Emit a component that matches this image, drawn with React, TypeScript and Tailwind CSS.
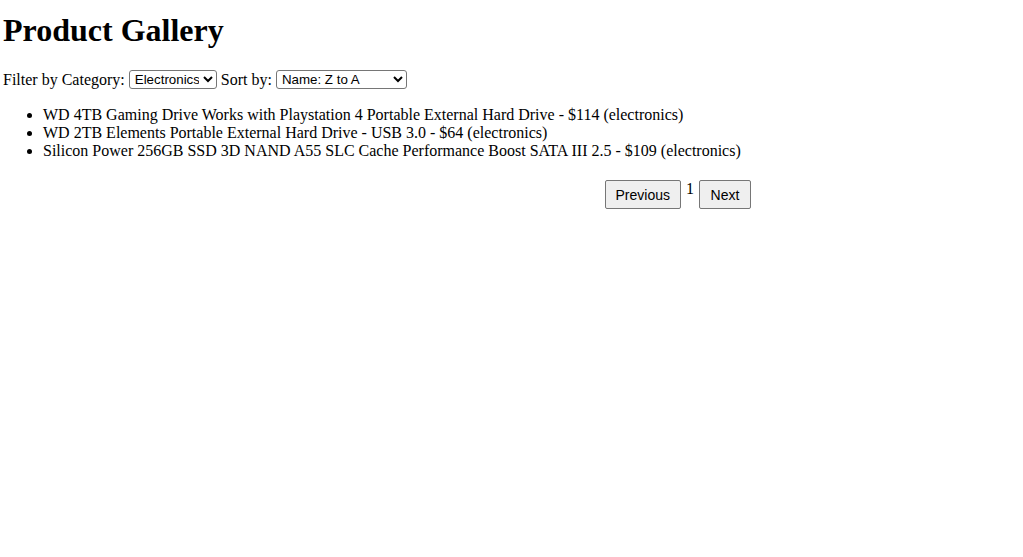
import React from "react";

export default function App() {
  const items = [
    "WD 4TB Gaming Drive Works with Playstation 4 Portable External Hard Drive - $114 (electronics)",
    "WD 2TB Elements Portable External Hard Drive - USB 3.0 - $64 (electronics)",
    "Silicon Power 256GB SSD 3D NAND A55 SLC Cache Performance Boost SATA III 2.5 - $109 (electronics)",
  ];
  return (
    <div className="bg-white text-black min-h-[557px] pl-[3px] text-[16px] leading-[18px]" style={{ fontFamily: '"Liberation Serif", "Times New Roman", serif' }}>
      <h1 className="text-[32px] font-bold leading-[37px] pt-[12px] mb-[21px]">Product Gallery</h1>
      <div className="leading-[19px] h-[19px] flex items-center">
        <span>Filter by Category:&nbsp;</span>
        <select
          defaultValue="electronics"
          className="w-[88px] h-[19px] border border-[#767676] rounded-[3px] bg-white text-[13.33px] px-[1px]"
          style={{ fontFamily: '"Liberation Sans", Arial, sans-serif' }}
        >
          <option value="all">All</option>
          <option value="electronics">Electronics</option>
          <option value="jewelery">Jewelery</option>
        </select>
        <span>&nbsp;Sort by:&nbsp;</span>
        <select
          defaultValue="za"
          className="w-[131px] h-[19px] border border-[#767676] rounded-[3px] bg-white text-[13.33px] px-[1px]"
          style={{ fontFamily: '"Liberation Sans", Arial, sans-serif' }}
        >
          <option value="az">Name: A to Z</option>
          <option value="za">Name: Z to A</option>
          <option value="lh">Price: Low to High</option>
          <option value="hl">Price: High to Low</option>
        </select>
      </div>
      <ul className="list-disc pl-[40px] mt-[17px]">
        {items.map((t) => (
          <li key={t} className="leading-[18px]">{t}</li>
        ))}
      </ul>
      <div className="flex justify-end w-[753px] mt-[20px]">
        <button
          className="mx-[5px] h-[29px] px-[10px] border border-[#767676] rounded-[2px] bg-[#efefef] text-[14px] text-black"
          style={{ fontFamily: '"Liberation Sans", Arial, sans-serif' }}
        >
          Previous
        </button>
        <span className="leading-[18px]">1</span>
        <button
          className="mx-[5px] h-[29px] w-[52px] border border-[#767676] rounded-[2px] bg-[#efefef] text-[14px] text-black"
          style={{ fontFamily: '"Liberation Sans", Arial, sans-serif' }}
        >
          Next
        </button>
      </div>
    </div>
  );
}
